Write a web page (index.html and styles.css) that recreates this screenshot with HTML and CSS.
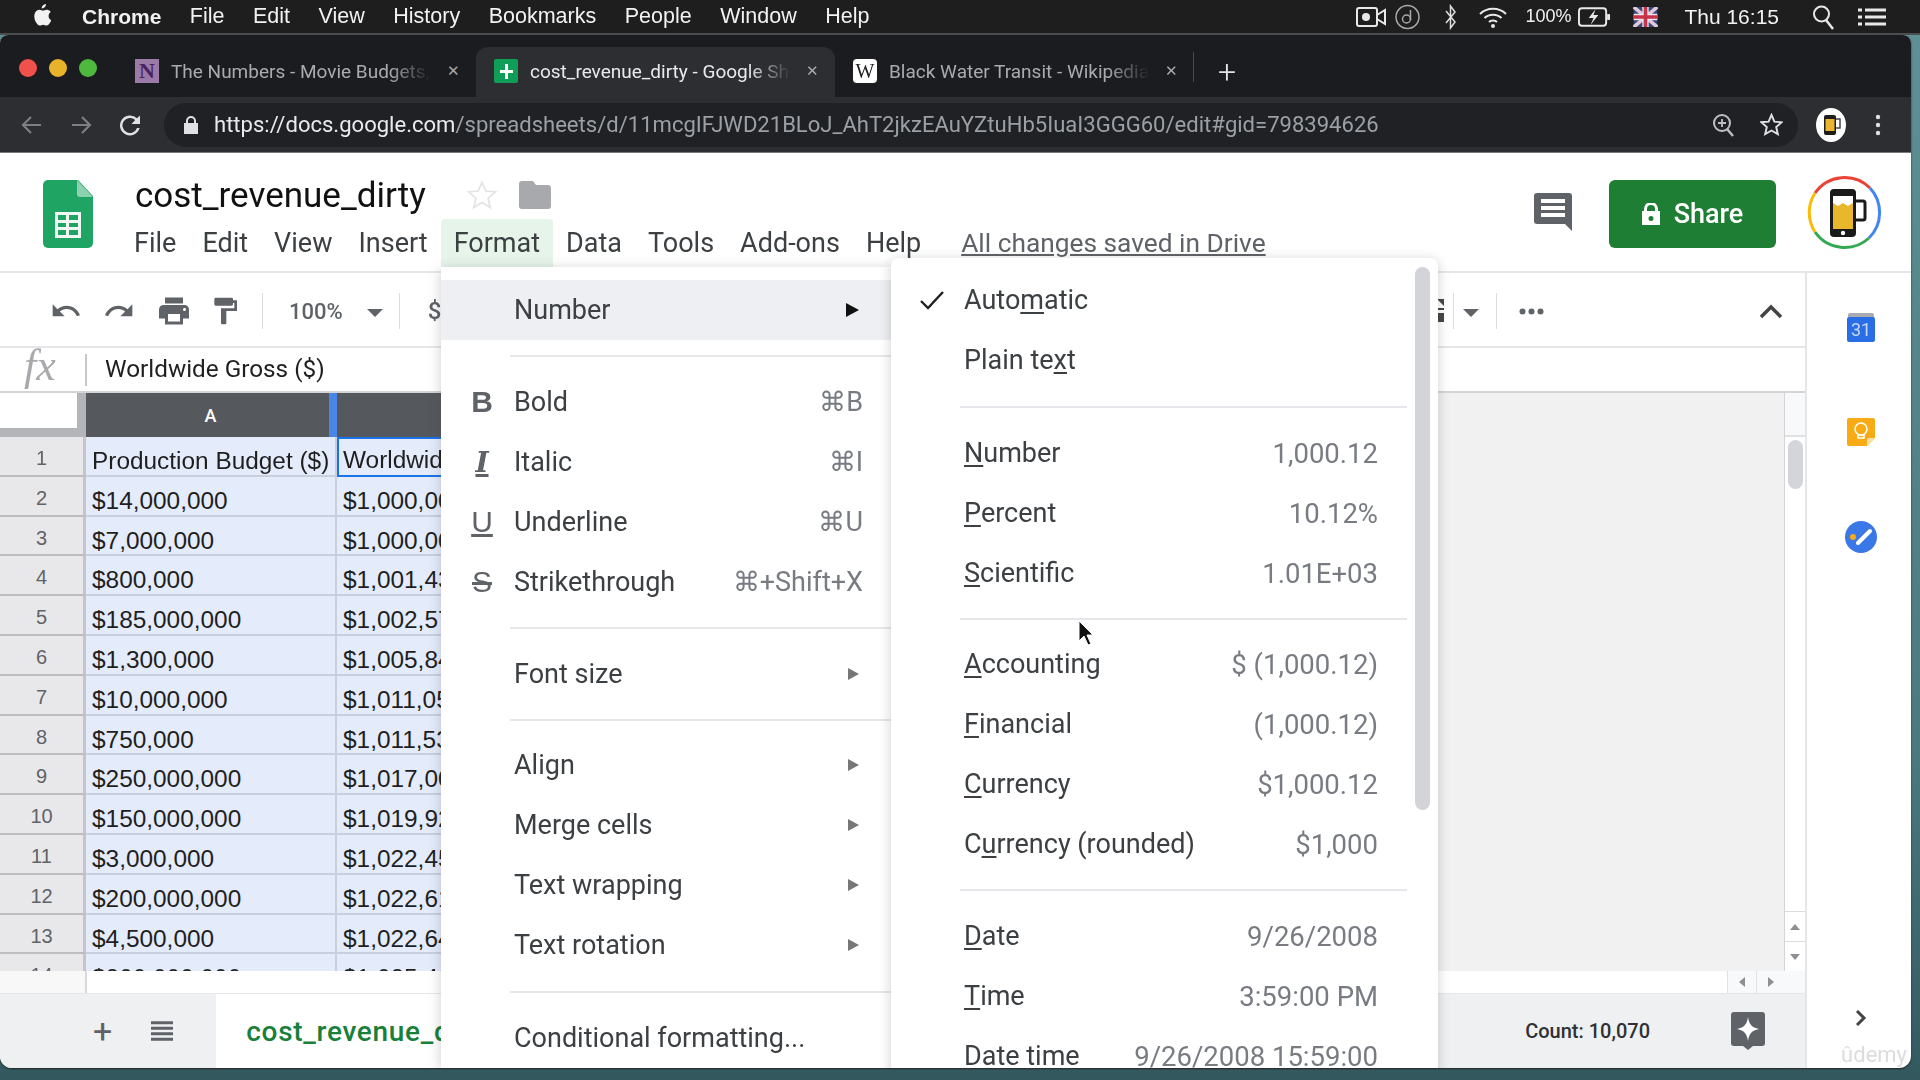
FILE: index.html
```html
<!DOCTYPE html>
<html lang="en">
  <head>
    <meta charset="UTF-8" />
    <title>cost_revenue_dirty - Google Sheets</title>
    <link rel="stylesheet" href="styles.css">
  </head>
  <body>
    <!-- mac menu bar -->
    <div class="menubar">
      <svg class="apple" width="20" height="24" viewBox="0 0 20 24"><path fill="#f2f2f2" d="M14 1c.2 2-1.9 4.600-4.200 4.400C9.500 3.200 11.800 1.100 14 1zM16.600 12.700c0-2.500 2-3.700 2.200-3.800-1.300-1.800-3.200-2.100-3.800-2.100-1.600-.2-3.200 1-4 1s-2.100-1-3.500-1c-1.800 0-3.400 1-4.300 2.600-1.900 3.200-.5 8 1.300 10.600.9 1.300 1.900 2.700 3.300 2.600 1.300 0 1.800-.8 3.400-.8s2 .8 3.400.8 2.300-1.300 3.200-2.600c1-1.500 1.400-2.900 1.400-3-.1 0-2.600-1-2.600-4.300z"/></svg>
      <b class="mac-item app-name">Chrome</b>
      <span class="mac-item">File</span>
      <span class="mac-item">Edit</span>
      <span class="mac-item">View</span>
      <span class="mac-item">History</span>
      <span class="mac-item">Bookmarks</span>
      <span class="mac-item">People</span>
      <span class="mac-item">Window</span>
      <span class="mac-item">Help</span>
      <div class="status">
        <svg width="30" height="24" viewBox="0 0 30 24"><rect x="1" y="3" width="20" height="18" rx="2" fill="none" stroke="#e8e8e8" stroke-width="2"/><circle cx="10" cy="12" r="4" fill="#e8e8e8"/><path d="M21 10l8-5v14l-8-5z" fill="none" stroke="#e8e8e8" stroke-width="2"/></svg>
        <svg class="st-d" width="25" height="26" viewBox="0 0 25 26"><circle cx="12.500" cy="13" r="11.500" fill="none" stroke="#a8a8a8" stroke-width="1.500"/><circle cx="11.500" cy="15" r="4" fill="none" stroke="#a8a8a8" stroke-width="1.500"/><path d="M15.500 6v10" stroke="#a8a8a8" stroke-width="1.500"/></svg>
        <svg class="st-bt" width="11" height="26" viewBox="0 0 11 26"><path d="M1 7l9 11-4.500 6V2l4.500 6-9 11" fill="none" stroke="#e0e0e0" stroke-width="1.500"/></svg>
        <svg class="st-wifi" width="30" height="24" viewBox="0 0 30 24"><path d="M2 9c7-7 19-7 26 0M6.500 13c4.500-4.500 12.500-4.500 17 0M11 17c2-2 6-2 8 0" fill="none" stroke="#e8e8e8" stroke-width="2"/><circle cx="15" cy="21" r="2" fill="#e8e8e8"/></svg>
        <span class="st-text st-pct">100%</span>
        <svg class="st-batt" width="33" height="22" viewBox="0 0 34 22"><rect x="1" y="2" width="28" height="18" rx="3" fill="none" stroke="#e8e8e8" stroke-width="2"/><rect x="30" y="8" width="3" height="6" fill="#e8e8e8"/><path d="M18 3l-7 9h5l-3 7 8-10h-5z" fill="#e8e8e8"/></svg>
        <svg class="st-flag" width="25" height="20" viewBox="0 0 26 22"><rect width="26" height="22" fill="#39457f"/><path d="M0 0l26 22M26 0L0 22" stroke="#e0c8d8" stroke-width="4"/><path d="M13 0v22M0 11h26" stroke="#e8e8ee" stroke-width="7"/><path d="M13 0v22M0 11h26" stroke="#c8324a" stroke-width="4"/></svg>
        <span class="st-text st-clock">Thu 16:15</span>
        <svg class="st-search" width="23" height="26" viewBox="0 0 23 26"><circle cx="9.500" cy="10" r="7.500" fill="none" stroke="#e8e8e8" stroke-width="2"/><path d="M14 16l7 9" stroke="#e8e8e8" stroke-width="2.500"/></svg>
        <svg class="st-list" width="28" height="20" viewBox="0 0 28 20"><path d="M7 3h21M7 10h21M7 17h21" stroke="#e8e8e8" stroke-width="3"/><path d="M0 3h4M0 10h4M0 17h4" stroke="#e8e8e8" stroke-width="3"/></svg>
      </div>
    </div>

    <div class="window">
      <!-- chrome tabs -->
      <div class="tabstrip">
        <div class="lights"><i class="light red"></i><i class="light yellow"></i><i class="light green"></i></div>
        <div class="tab">
          <span class="favicon fav-n">N</span>
          <span class="tab-title">The Numbers - Movie Budgets,</span>
          <span class="tab-x">✕</span>
        </div>
        <div class="tab active">
          <svg class="favicon" viewBox="0 0 24 24"><rect width="24" height="24" rx="2" fill="#0f9d58"/><path d="M11 5h3v6h5v3h-5v6h-3v-6H6v-3h5z" fill="#fff"/></svg>
          <span class="tab-title">cost_revenue_dirty - Google Sh</span>
          <span class="tab-x">✕</span>
        </div>
        <div class="tab">
          <span class="favicon fav-w">W</span>
          <span class="tab-title">Black Water Transit - Wikipedia</span>
          <span class="tab-x">✕</span>
        </div>
        <i class="tab-sep"></i>
        <span class="new-tab">+</span>
      </div>

      <!-- chrome address bar -->
      <div class="navbar">
        <svg class="nav-icon back" width="22" height="22" viewBox="0 0 22 22"><path d="M20 11H3M10 3l-8 8 8 8" fill="none" stroke="#7c7f84" stroke-width="2.200"/></svg>
        <svg class="nav-icon fwd" width="22" height="22" viewBox="0 0 22 22"><path d="M2 11h17M12 3l8 8-8 8" fill="none" stroke="#7c7f84" stroke-width="2.200"/></svg>
        <svg class="nav-icon reload" width="24" height="24" viewBox="0 0 24 24"><path fill="#dfe1e5" d="M19 5.300A10 10 0 1 0 21.600 15h-2.600a7.500 7.500 0 1 1-1.800-7.900L13.500 11H22V2.500z"/></svg>
        <div class="omnibox">
          <svg class="lock" width="14" height="18" viewBox="0 0 14 18"><path fill="#dfe1e5" d="M2 7V5a5 5 0 0 1 10 0v2h2v11H0V7zm2 0h6V5a3 3 0 0 0-6 0z"/></svg>
          <span class="url"><span class="url-host">https://docs.google.com</span>/spreadsheets/d/11mcgIFJWD21BLoJ_AhT2jkzEAuYZtuHb5IuaI3GGG60/edit#gid=798394626</span>
          <svg class="omni-zoom" width="22" height="24" viewBox="0 0 22 24"><circle cx="10" cy="10" r="8" fill="none" stroke="#bdc1c6" stroke-width="2"/><path d="M15 16l6 7" stroke="#bdc1c6" stroke-width="2.400"/><path d="M10 6v8M6 10h8" stroke="#bdc1c6" stroke-width="1.800"/></svg>
          <svg class="omni-star" width="23" height="23" viewBox="0 0 24 24"><path d="M12 2l3 7 7.500.7-5.600 5 1.700 7.400L12 18.300 5.400 22l1.700-7.400-5.600-5L9 9z" fill="none" stroke="#dfe1e5" stroke-width="2"/></svg>
        </div>
        <svg class="nav-avatar" width="30" height="34" viewBox="0 0 30 34"><ellipse cx="15" cy="17" rx="15" ry="17" fill="#fff"/><rect x="8" y="7" width="12" height="20" rx="2" fill="#1d1d1d"/><rect x="9.500" y="11" width="9" height="12" fill="#e8b52c"/><path d="M20 11h4v9h-4" fill="none" stroke="#444" stroke-width="1.500"/></svg>
        <svg class="nav-dots" width="6" height="22" viewBox="0 0 6 22"><circle cx="3" cy="3" r="2.200" fill="#dfe1e5"/><circle cx="3" cy="11" r="2.200" fill="#dfe1e5"/><circle cx="3" cy="19" r="2.200" fill="#dfe1e5"/></svg>
      </div>

      <!-- docs header -->
      <div class="docs">
        <header class="doc-head">
          <svg class="sheets-logo" width="50" height="68" viewBox="0 0 50 68"><path d="M5 0h30l15 16v47a5 5 0 0 1-5 5H5a5 5 0 0 1-5-5V5a5 5 0 0 1 5-5z" fill="#1fa463"/><path d="M34 0l16 17H37a3 3 0 0 1-3-3z" fill="#8ed1b1"/><path d="M12 32h26v26H12zm3 3v5h8v-5zm11 0v5h9v-5zm-11 8v4h8v-4zm11 0v4h9v-4zm-11 7v5h8v-5zm11 0v5h9v-5z" fill="#f1f8f4" fill-rule="evenodd"/></svg>
          <div class="doc-info">
            <div class="doc-title-row">
              <span class="doc-title">cost_revenue_dirty</span>
              <svg class="title-star" width="32" height="32" viewBox="0 0 24 24"><path d="M12 2.500l2.900 6.500 7.100.7-5.400 4.700 1.600 7-6.200-3.700-6.200 3.700 1.600-7L2 9.700 9.100 9z" fill="none" stroke="#e3e3e6" stroke-width="1.300"/></svg>
              <svg class="title-folder" width="32" height="28" viewBox="0 0 32 28"><path d="M3 0h11l3 4h12a3 3 0 0 1 3 3v18a3 3 0 0 1-3 3H3a3 3 0 0 1-3-3V3a3 3 0 0 1 3-3z" fill="#a8a9ad"/></svg>
            </div>
            <nav class="doc-menu">
              <span class="doc-menu-item">File</span>
              <span class="doc-menu-item">Edit</span>
              <span class="doc-menu-item">View</span>
              <span class="doc-menu-item">Insert</span>
              <span class="doc-menu-item open">Format</span>
              <span class="doc-menu-item">Data</span>
              <span class="doc-menu-item">Tools</span>
              <span class="doc-menu-item">Add-ons</span>
              <span class="doc-menu-item">Help</span>
              <a class="saved">All changes saved in Drive</a>
            </nav>
          </div>
          <svg class="comment-icon" width="38" height="38" viewBox="0 0 38 38"><path d="M3 0h32a3 3 0 0 1 3 3v35l-7-7H3a3 3 0 0 1-3-3V3a3 3 0 0 1 3-3z" fill="#5f6368"/><path d="M7 8h24M7 15h24M7 22h24" stroke="#fff" stroke-width="4"/></svg>
          <button class="share">
            <svg width="18" height="22" viewBox="0 0 18 22"><path fill="#fff" d="M2 8V6a7 7 0 0 1 14 0v2h2v14H0V8zm3 0h8V6a4 4 0 0 0-8 0zm4 5a2.500 2.500 0 1 0 0 5 2.500 2.500 0 0 0 0-5z" fill-rule="evenodd"/></svg>
            Share
          </button>
          <svg class="doc-avatar" width="75" height="75" viewBox="0 0 75 75">
            <path d="M8 18A36 36 0 0 1 63 13" fill="none" stroke="#ea4335" stroke-width="3"/>
            <path d="M63 13A36 36 0 0 1 62 63" fill="none" stroke="#4285f4" stroke-width="3"/>
            <path d="M62 63A36 36 0 0 1 8 57" fill="none" stroke="#34a853" stroke-width="3"/>
            <path d="M8 57A36 36 0 0 1 8 18" fill="none" stroke="#fbbc04" stroke-width="3"/>
            <rect x="23" y="14" width="26" height="48" rx="4" fill="#1a1a1a"/>
            <rect x="26" y="21" width="20" height="33" fill="#e9b72b"/>
            <path d="M26 21h20v7l-5 3-5-3-5 3-5-3z" fill="#fff"/>
            <path d="M49 26h7a2 2 0 0 1 2 2v15a2 2 0 0 1-2 2h-7" fill="none" stroke="#1a1a1a" stroke-width="3"/>
            <circle cx="36" cy="58" r="2.200" fill="#fff"/>
          </svg>
        </header>

        <div class="doc-body">
          <div class="main">
            <!-- toolbar -->
            <div class="toolbar">
              <svg class="tool" width="32" height="32" viewBox="0 0 24 24"><path fill="#5f6368" d="M12.500 8c-2.650 0-5.050.99-6.900 2.600L2 7v9h9l-3.620-3.620c1.390-1.160 3.160-1.880 5.120-1.880 3.540 0 6.550 2.310 7.600 5.500l2.370-.78C21.080 11.030 17.150 8 12.500 8z"/></svg>
              <svg class="tool" width="32" height="32" viewBox="0 0 24 24"><path fill="#5f6368" d="M18.400 10.600C16.550 8.990 14.150 8 11.500 8c-4.650 0-8.580 3.030-9.960 7.220L3.900 16c1.050-3.190 4.050-5.500 7.600-5.500 1.950 0 3.730.72 5.120 1.880L13 16h9V7l-3.600 3.600z"/></svg>
              <svg class="tool tool-print" width="36" height="36" viewBox="0 0 24 24"><path fill="#5f6368" d="M19 8H5c-1.660 0-3 1.340-3 3v6h4v4h12v-4h4v-6c0-1.660-1.340-3-3-3zm-3 11H8v-5h8v5zm3-7c-.55 0-1-.45-1-1s.45-1 1-1 1 .45 1 1-.45 1-1 1zm-1-9H6v4h12V3z"/></svg>
              <svg class="tool" width="32" height="32" viewBox="0 0 24 24"><path fill="#5f6368" d="M18 4V3c0-.55-.45-1-1-1H5c-.55 0-1 .45-1 1v4c0 .55.45 1 1 1h12c.55 0 1-.45 1-1V6h1v4H9v11c0 .55.45 1 1 1h2c.55 0 1-.45 1-1v-9h8V4h-3z"/></svg>
              <i class="tool-sep"></i>
              <span class="zoom-val">100%</span>
              <i class="caret"></i>
              <i class="tool-sep"></i>
              <span class="tool-dollar">$</span>
              <div class="tool-right">
                <svg width="8" height="26" viewBox="0 0 8 26"><path d="M0 1h7v7M0 10h7v2H0zm0 5h7v9H0" fill="#444"/></svg>
                <i class="tool-sep tall"></i>
                <i class="caret"></i>
                <i class="tool-sep wide"></i>
                <svg width="25" height="7" viewBox="0 0 25 7"><circle cx="3.500" cy="3.500" r="3" fill="#5f6368"/><circle cx="12.500" cy="3.500" r="3" fill="#5f6368"/><circle cx="21.500" cy="3.500" r="3" fill="#5f6368"/></svg>
                <svg class="collapse" width="24" height="15" viewBox="0 0 24 15"><path d="M2 13L12 3l10 10" fill="none" stroke="#444" stroke-width="3.500"/></svg>
              </div>
            </div>

            <!-- formula bar -->
            <div class="formula">
              <span class="fx">fx</span>
              <i class="fx-sep"></i>
              <span class="formula-text">Worldwide Gross ($)</span>
            </div>

            <!-- grid -->
            <div class="sheet-area">
              <div class="sheet">
                <div class="corner"></div>
                <div class="col-head col-a">A</div>
                <div class="col-head"></div>

                <div class="row-num">1</div><div class="cell">Production Budget ($)</div><div class="cell current">Worldwide Gross ($)</div>
                <div class="row-num">2</div><div class="cell">$14,000,000</div><div class="cell">$1,000,000</div>
                <div class="row-num">3</div><div class="cell">$7,000,000</div><div class="cell">$1,000,000</div>
                <div class="row-num">4</div><div class="cell">$800,000</div><div class="cell">$1,001,437</div>
                <div class="row-num">5</div><div class="cell">$185,000,000</div><div class="cell">$1,002,570</div>
                <div class="row-num">6</div><div class="cell">$1,300,000</div><div class="cell">$1,005,840</div>
                <div class="row-num">7</div><div class="cell">$10,000,000</div><div class="cell">$1,011,054</div>
                <div class="row-num">8</div><div class="cell">$750,000</div><div class="cell">$1,011,530</div>
                <div class="row-num">9</div><div class="cell">$250,000,000</div><div class="cell">$1,017,003</div>
                <div class="row-num">10</div><div class="cell">$150,000,000</div><div class="cell">$1,019,920</div>
                <div class="row-num">11</div><div class="cell">$3,000,000</div><div class="cell">$1,022,450</div>
                <div class="row-num">12</div><div class="cell">$200,000,000</div><div class="cell">$1,022,610</div>
                <div class="row-num">13</div><div class="cell">$4,500,000</div><div class="cell">$1,022,640</div>
                <div class="row-num">14</div><div class="cell">$200,000,000</div><div class="cell">$1,025,400</div>
              </div>
              <div class="vscroll">
                <div class="vscroll-top"></div>
                <div class="vscroll-thumb"></div>
                <div class="vscroll-btn"><i class="tri up"></i></div>
                <div class="vscroll-btn"><i class="tri down"></i></div>
              </div>
            </div>

            <div class="hscroll">
              <div class="hscroll-left"></div>
              <div class="hscroll-btn"><i class="tri left"></i></div>
              <div class="hscroll-btn"><i class="tri right"></i></div>
              <div class="hscroll-end"></div>
            </div>

            <!-- sheet tabs -->
            <div class="bottombar">
              <span class="add-sheet">+</span>
              <svg class="all-sheets" width="22" height="22" viewBox="0 0 24 22"><path d="M0 2h24M0 8h24M0 14h24M0 20h24" stroke="#5f6368" stroke-width="3.500"/></svg>
              <div class="sheet-tab">cost_revenue_dirty</div>
              <span class="count">Count: 10,070</span>
              <svg class="explore" width="34" height="38" viewBox="0 0 34 38"><path d="M3 0h28a3 3 0 0 1 3 3v28a3 3 0 0 1-3 3h-9l-5 4-5-4H3a3 3 0 0 1-3-3V3a3 3 0 0 1 3-3z" fill="#5f6368"/><path d="M17 5c1 7 3.500 10.500 11 12-7.500 1.500-10 5-11 12-1-7-3.500-10.500-11-12 7.500-1.500 10-5 11-12z" fill="#fff"/></svg>
            </div>
          </div>

          <!-- side panel -->
          <aside class="side">
            <svg class="side-cal" width="28" height="29" viewBox="0 0 28 29"><rect x="1" y="0" width="26" height="8" rx="2" fill="#a9abb0"/><rect y="4" width="28" height="25" rx="2" fill="#2a6ee6"/><text x="14" y="23" text-anchor="middle" class="cal-num">31</text></svg>
            <svg class="side-keep" width="28" height="28" viewBox="0 0 28 28"><path d="M2 0h24a2 2 0 0 1 2 2v18l-8 8H2a2 2 0 0 1-2-2V2a2 2 0 0 1 2-2z" fill="#f7ab15"/><path d="M20 28v-6a2 2 0 0 1 2-2h6z" fill="#fbe0a4"/><circle cx="14" cy="11" r="6" fill="none" stroke="#fff" stroke-width="1.500"/><path d="M11 17h6v3h-6z" fill="none" stroke="#fff" stroke-width="1.500"/></svg>
            <svg class="side-tasks" width="32" height="32" viewBox="0 0 32 32"><circle cx="16" cy="16" r="16" fill="#3b78e7"/><path d="M13 22L25 10" stroke="#fff" stroke-width="4" stroke-linecap="round"/><circle cx="8" cy="16" r="3" fill="#f7ab15"/></svg>
            <svg class="side-open" width="12" height="18" viewBox="0 0 12 18"><path d="M2 2l7 7-7 7" fill="none" stroke="#444" stroke-width="3"/></svg>
          </aside>
        </div>
      </div>

      <!-- format menu, lies over the grid -->
      <div class="menu format-menu">
        <div class="menu-row hl"><span class="m-icon"></span><span>Number</span><i class="arrow dark"></i></div>
        <div class="menu-sep"></div>
        <div class="menu-row"><span class="m-icon m-b">B</span><span>Bold</span><span class="m-key">⌘B</span></div>
        <div class="menu-row"><span class="m-icon m-i">I</span><span>Italic</span><span class="m-key">⌘I</span></div>
        <div class="menu-row"><span class="m-icon m-u">U</span><span>Underline</span><span class="m-key">⌘U</span></div>
        <div class="menu-row"><span class="m-icon m-s">S</span><span>Strikethrough</span><span class="m-key">⌘+Shift+X</span></div>
        <div class="menu-sep"></div>
        <div class="menu-row"><span class="m-icon"></span><span>Font size</span><i class="arrow"></i></div>
        <div class="menu-sep narrow"></div>
        <div class="menu-row"><span class="m-icon"></span><span>Align</span><i class="arrow"></i></div>
        <div class="menu-row"><span class="m-icon"></span><span>Merge cells</span><i class="arrow"></i></div>
        <div class="menu-row"><span class="m-icon"></span><span>Text wrapping</span><i class="arrow"></i></div>
        <div class="menu-row"><span class="m-icon"></span><span>Text rotation</span><i class="arrow"></i></div>
        <div class="menu-sep broad"></div>
        <div class="menu-row"><span class="m-icon"></span><span>Conditional formatting...</span></div>
      </div>

      <!-- number submenu -->
      <div class="menu number-menu">
        <div class="sub-thumb"></div>
        <div class="menu-row">
          <svg class="check" width="26" height="20" viewBox="0 0 26 20"><path d="M2 11l7 7L24 2" fill="none" stroke="#202124" stroke-width="2.400"/></svg>
          <span>Auto<u>m</u>atic</span>
        </div>
        <div class="menu-row"><span>Plain te<u>x</u>t</span></div>
        <div class="menu-sep broad"></div>
        <div class="menu-row"><span><u>N</u>umber</span><span class="m-key">1,000.12</span></div>
        <div class="menu-row"><span><u>P</u>ercent</span><span class="m-key">10.12%</span></div>
        <div class="menu-row"><span><u>S</u>cientific</span><span class="m-key">1.01E+03</span></div>
        <div class="menu-sep narrow"></div>
        <div class="menu-row"><span><u>A</u>ccounting</span><span class="m-key">$ (1,000.12)</span></div>
        <div class="menu-row"><span><u>F</u>inancial</span><span class="m-key">(1,000.12)</span></div>
        <div class="menu-row"><span><u>C</u>urrency</span><span class="m-key">$1,000.12</span></div>
        <div class="menu-row"><span>C<u>u</u>rrency (rounded)</span><span class="m-key">$1,000</span></div>
        <div class="menu-sep"></div>
        <div class="menu-row"><span><u>D</u>ate</span><span class="m-key">9/26/2008</span></div>
        <div class="menu-row"><span><u>T</u>ime</span><span class="m-key">3:59:00 PM</span></div>
        <div class="menu-row"><span>Date t<u>i</u>me</span><span class="m-key">9/26/2008 15:59:00</span></div>
      </div>

      <svg class="cursor" width="16" height="26" viewBox="0 0 16 26"><path d="M1 1v20l5-5 4 9 3-1-4-9h6z" fill="#111" stroke="#fff" stroke-width="1"/></svg>
      <span class="watermark">ûdemy</span>
    </div>
  </body>
</html>
```

FILE: styles.css
```css
* {
  box-sizing: border-box;
}
body {
  margin: 0;
  width: 1920px;
  height: 1080px;
  overflow: hidden;
  background: linear-gradient(180deg, #5e9294 0%, #4a7a7e 70%, #33595f 100%);
  font-family: Roboto, "Liberation Sans", sans-serif;
}
i {
  display: block;
}

/* mac menu bar */
.menubar {
  height: 35px;
  background-color: #1e1e1e;
  border-bottom: 2px solid #4d4e50;
  color: #f2f2f2;
  display: flex;
  align-items: center;
  padding-left: 32px;
  font-family: "Liberation Sans", sans-serif;
  font-size: 21.5px;
  filter: blur(0.4px);
}
.apple {
  margin-right: 30px;
  margin-top: -3px;
}
.mac-item {
  margin-right: 28.5px;
}
.app-name {
  font-size: 21px;
}
.status {
  margin-left: auto;
  display: flex;
  align-items: center;
  padding-right: 34px;
}
.st-d {
  margin-left: 9px;
}
.st-bt {
  margin-left: 25px;
}
.st-wifi {
  margin-left: 22px;
}
.st-text {
  font-size: 18px;
  white-space: nowrap;
}
.st-pct {
  margin-left: 17px;
}
.st-batt {
  margin-left: 7px;
}
.st-flag {
  margin-left: 22px;
}
.st-clock {
  margin-left: 26px;
  font-size: 21px;
}
.st-search {
  margin-left: 33px;
}
.st-list {
  margin-left: 23px;
}

/* browser window */
.window {
  position: relative;
  width: 1911px;
  height: 1033px;
  overflow: hidden;
  border-radius: 8px 8px 12px 12px;
  display: flex;
  flex-direction: column;
  background-color: #fff;
  box-shadow: 0 1px 2px #222;
  filter: blur(0.4px);
}
.tabstrip {
  height: 62px;
  background-color: #1b1c1f;
  display: flex;
  align-items: flex-end;
  flex-shrink: 0;
}
.lights {
  display: flex;
  gap: 12px;
  padding: 0 0 20px 19px;
  width: 117px;
}
.light {
  width: 18px;
  height: 18px;
  border-radius: 50%;
}
.red {
  background-color: #f2504b;
}
.yellow {
  background-color: #e6b32a;
}
.green {
  background-color: #4fb93e;
}
.tab {
  width: 359px;
  height: 50px;
  padding: 0 16px 2px 18px;
  display: flex;
  align-items: center;
  color: #a9abae;
  font-size: 19px;
  border-radius: 12px 12px 0 0;
}
.tab.active {
  background-color: #2c2e31;
  color: #e8eaed;
}
.favicon {
  width: 24px;
  height: 24px;
  margin-right: 12px;
  flex-shrink: 0;
  display: flex;
  align-items: center;
  justify-content: center;
}
.fav-n {
  background-color: #9c7aa8;
  color: #4a2460;
  font: bold 22px "Liberation Serif", serif;
}
.fav-w {
  background-color: #fff;
  color: #222;
  border-radius: 4px;
  font: 20px "Liberation Serif", serif;
}
.tab-title {
  flex: 1;
  min-width: 0;
  overflow: hidden;
  white-space: nowrap;
  -webkit-mask-image: linear-gradient(90deg, #000 82%, transparent 98%);
  mask-image: linear-gradient(90deg, #000 82%, transparent 98%);
}
.tab-x {
  margin-left: 10px;
  font-size: 15px;
  color: #aaa;
}
.tab-sep {
  width: 1px;
  height: 30px;
  margin: 0 0 15px -1px;
  background-color: #4a4b4e;
}
.new-tab {
  color: #dfe1e5;
  font-size: 32px;
  font-weight: 300;
  margin: 0 0 6px 24px;
}
.navbar {
  height: 56px;
  flex-shrink: 0;
  background-color: #2c2e31;
  border-bottom: 1px solid #77797c;
  display: flex;
  align-items: center;
  padding-left: 21px;
}
.nav-icon.fwd {
  margin-left: 27px;
}
.nav-icon.reload {
  margin-left: 26px;
}
.omnibox {
  width: 1634px;
  height: 44px;
  margin-left: 22px;
  border-radius: 22px;
  background-color: #202124;
  display: flex;
  align-items: center;
  padding-left: 20px;
}
.url {
  margin-left: 16px;
  color: #9aa0a6;
  font-size: 22.05px;
  white-space: nowrap;
}
.url-host {
  color: #e8eaed;
}
.omni-zoom {
  margin-left: auto;
}
.omni-star {
  margin-left: 26px;
  margin-right: 15px;
}
.nav-avatar {
  margin-left: 18px;
}
.nav-dots {
  margin-left: 29px;
}

/* docs header */
.docs {
  flex: 1;
  display: flex;
  flex-direction: column;
  min-height: 0;
}
.doc-head {
  height: 120px;
  flex-shrink: 0;
  border-bottom: 2px solid #e6e6e8;
  display: flex;
  align-items: flex-start;
  padding-left: 43px;
}
.sheets-logo {
  margin-top: 27px;
}
.doc-info {
  margin-left: 42px;
  width: 1400px;
}
.doc-title-row {
  margin-top: 18px;
  height: 48px;
  display: flex;
  align-items: center;
}
.doc-title {
  font-size: 35px;
  color: #111;
}
.title-star {
  margin-left: 40px;
}
.title-folder {
  margin-left: 21px;
}
.doc-menu {
  display: flex;
  align-items: center;
  margin-left: -14px;
  font-size: 27px;
  color: #3c4043;
}
.doc-menu-item {
  height: 48px;
  line-height: 48px;
  padding: 0 13px;
}
.doc-menu-item.open {
  background-color: #e6f4ea;
  border-radius: 4px 4px 0 0;
}
.saved {
  margin-left: 27px;
  color: #5f6368;
  font-size: 26.3px;
  text-decoration: underline;
}
.comment-icon {
  margin: 40px 0 0 -1px;
}
.share {
  width: 167px;
  height: 68px;
  margin: 27px 0 0 37px;
  padding-bottom: 2px;
  border: none;
  border-radius: 6px;
  background-color: #1e7e34;
  color: #fff;
  font: 500 27px Roboto, sans-serif;
  display: flex;
  align-items: center;
  justify-content: center;
  gap: 14px;
}
.doc-avatar {
  margin: 22px 0 0 31px;
}

/* below the header */
.doc-body {
  flex: 1;
  display: flex;
  min-height: 0;
}
.main {
  width: 1807px;
  display: flex;
  flex-direction: column;
  border-right: 2px solid #e6e6e8;
}
.toolbar {
  height: 75px;
  flex-shrink: 0;
  border-bottom: 2px solid #e6e6e8;
  display: flex;
  align-items: center;
  padding: 3px 0 0 50px;
}
.tool {
  margin-right: 21px;
}
.tool-print {
  margin-right: 17px;
}
.tool-sep {
  width: 1px;
  height: 36px;
  background-color: #dadce0;
}
.zoom-val {
  margin-left: 26px;
  font-size: 22px;
  color: #5f6368;
  font-weight: 500;
}
.caret {
  width: 0;
  height: 0;
  margin: 3px 16px 0 24px;
  border-left: 8px solid transparent;
  border-right: 8px solid transparent;
  border-top: 8px solid #5f6368;
}
.tool-dollar {
  margin-left: 28px;
  font-size: 24px;
  font-weight: 500;
  color: #5f6368;
}
.tool-right {
  margin-left: auto;
  display: flex;
  align-items: center;
  padding: 0 22px 0 8px;
  width: 376px;
}
.tool-right .tool-sep.tall {
  margin-left: 8px;
}
.tool-right .caret {
  margin: 3px 17px 0 9px;
}
.tool-sep.wide {
  margin-right: 22px;
}
.collapse {
  margin-left: auto;
}
.formula {
  height: 45px;
  flex-shrink: 0;
  display: flex;
  align-items: center;
  border-bottom: 2px solid #d4d4d6;
}
.fx {
  width: 85px;
  padding-left: 24px;
  font: italic 44px "Liberation Serif", serif;
  line-height: 40px;
  margin-top: -7px;
  color: #a8a9ac;
}
.fx-sep {
  width: 2px;
  height: 32px;
  background-color: #c8c8ca;
}
.formula-text {
  margin: -2px 0 0 18px;
  font-size: 24.3px;
  color: #1f1f1f;
}

/* the grid */
.sheet-area {
  height: 578px;
  flex-shrink: 0;
  display: flex;
  background-color: #f1f1f1;
}
.sheet {
  flex: 1;
  overflow: hidden;
  display: grid;
  grid-template-columns: 86px 251px 260px;
  grid-template-rows: 44px;
  grid-auto-rows: 39.8px;
  font-family: "Liberation Sans", sans-serif;
}
.corner {
  background-color: #fff;
  border-right: 9px solid #b4b5b8;
  border-bottom: 9px solid #b4b5b8;
}
.col-head {
  background-color: #55585c;
  color: #fff;
  font: 500 18px Roboto, sans-serif;
  text-align: center;
  line-height: 46px;
  white-space: nowrap;
}
.col-a {
  border-right: 8px solid #4a86e8;
  padding-left: 6px;
}
.row-num {
  background-color: #e8e8ea;
  border-right: 3px solid #c4c5c9;
  border-bottom: 2px solid #bcbdc1;
  color: #606368;
  font-size: 20px;
  text-align: center;
  line-height: 43px;
  overflow: hidden;
}
.cell {
  background-color: #e4ebfb;
  border-right: 2px solid #c9cfdc;
  border-bottom: 2px solid #c9cfdc;
  color: #1f1f1f;
  font-size: 24.4px;
  line-height: 38px;
  padding: 5px 0 0 6px;
  white-space: nowrap;
  overflow: hidden;
}
.cell.current {
  border: 2px solid #1a73e8;
  padding: 3px 0 0 4px;
  line-height: 36px;
}
.vscroll {
  width: 21px;
  display: flex;
  flex-direction: column;
  background-color: #fff;
  border-left: 1px solid #d4d4d6;
}
.vscroll-top {
  height: 44px;
  background-color: #f8f9fa;
  border-bottom: 2px solid #dfe1e5;
}
.vscroll-thumb {
  width: 15px;
  height: 49px;
  margin: 3px 0 auto 3px;
  border-radius: 8px;
  background-color: #d4d5da;
}
.vscroll-btn {
  height: 30px;
  border-top: 1px solid #dadce0;
  display: flex;
  align-items: center;
  justify-content: center;
}
.tri {
  width: 0;
  height: 0;
  border: 5px solid transparent;
}
.tri.up {
  border-top: 0;
  border-bottom: 6px solid #8d8f94;
  border-left-width: 5px;
  border-right-width: 5px;
}
.tri.down {
  border-bottom: 0;
  border-top: 6px solid #8d8f94;
}
.tri.left {
  border-left: 0;
  border-right: 6px solid #8d8f94;
}
.tri.right {
  border-right: 0;
  border-left: 6px solid #8d8f94;
}
.hscroll {
  height: 22px;
  flex-shrink: 0;
  display: flex;
  background-color: #fff;
}
.hscroll-left {
  width: 1727px;
  background: linear-gradient(90deg, #f8f8f8 85px, #d8d8dc 85px, #d8d8dc 87px, #fff 87px);
}
.hscroll-btn {
  width: 29px;
  display: flex;
  align-items: center;
  justify-content: center;
  background-color: #f8f9fa;
  border-left: 1px solid #dfe1e5;
}
.hscroll-end {
  flex: 1;
  background-color: #f8f9fa;
}
.bottombar {
  flex: 1;
  display: flex;
  align-items: center;
  background-color: #eff0f2;
  border-top: 1px solid #e6e6e8;
}
.add-sheet {
  margin-left: 93px;
  font-size: 34px;
  color: #5f6368;
  line-height: 1;
}
.all-sheets {
  margin-left: 39px;
}
.sheet-tab {
  margin-left: 43px;
  width: 300px;
  height: 100%;
  padding-left: 30px;
  display: flex;
  align-items: center;
  background-color: #fff;
  color: #188038;
  font-size: 28px;
  font-weight: 500;
  letter-spacing: 0.7px;
  white-space: nowrap;
}
.count {
  margin-left: auto;
  font-size: 20px;
  font-weight: 500;
  color: #303134;
}
.explore {
  margin: 0 40px 0 81px;
}

/* side panel */
.side {
  flex: 1;
  display: flex;
  flex-direction: column;
  align-items: center;
  padding: 40px 0 0 4px;
}
.cal-num {
  font: 400 18px Roboto, sans-serif;
  fill: #c8d8f8;
}
.side-keep {
  margin-top: 76px;
}
.side-tasks {
  margin-top: 75px;
}
.side-open {
  margin-top: auto;
  margin-bottom: 41px;
}

/* menus */
.menu {
  position: absolute;
  background-color: #fff;
  box-shadow: 0 2px 12px rgba(60, 64, 67, 0.25);
  color: #3c4043;
  font-size: 27px;
}
.format-menu {
  left: 441px;
  top: 232px;
  width: 450px;
  padding-top: 13px;
}
.number-menu {
  left: 891px;
  top: 223px;
  width: 547px;
  padding-top: 12px;
  border-radius: 8px 8px 0 0;
}
.menu-row {
  height: 60px;
  display: flex;
  align-items: center;
  justify-content: space-between;
  padding-right: 28px;
  white-space: nowrap;
}
.menu-row.hl {
  background-color: #eeeff2;
}
.m-icon {
  width: 73px;
  flex-shrink: 0;
  text-align: center;
  padding-left: 9px;
  color: #5f6368;
  font: bold 30px "Liberation Sans", sans-serif;
}
.m-icon + span {
  margin-right: auto;
}
.m-i {
  font: italic bold 28px "DejaVu Serif", serif;
  text-decoration: underline;
  text-decoration-thickness: 3px;
}
.m-u {
  font-weight: normal;
  text-decoration: underline;
  text-decoration-thickness: 3px;
}
.m-s {
  font-weight: normal;
  text-decoration: line-through;
  text-decoration-thickness: 3px;
}
.m-key {
  color: #787c82;
}
.number-menu .m-key {
  font-size: 27.5px;
}
.menu-sep {
  height: 32px;
  display: flex;
  align-items: center;
}
.menu-sep.narrow {
  height: 31px;
}
.menu-sep.broad {
  height: 33px;
}
.menu-sep::before {
  content: "";
  display: block;
  width: 100%;
  height: 2px;
  margin-left: 69px;
  background-color: #e6e7eb;
}
.arrow {
  width: 0;
  height: 0;
  margin-right: 4px;
  border-top: 6px solid transparent;
  border-bottom: 6px solid transparent;
  border-left: 11px solid #777;
}
.arrow.dark {
  border-top-width: 7px;
  border-bottom-width: 7px;
  border-left: 13px solid #111;
}
.number-menu .menu-row {
  padding: 0 60px 0 73px;
  position: relative;
}
.number-menu .menu-sep {
  padding-right: 31px;
}
.check {
  position: absolute;
  left: 28px;
  top: 20px;
}
.sub-thumb {
  position: absolute;
  left: 524px;
  top: 9px;
  width: 15px;
  height: 543px;
  border-radius: 8px;
  background-color: #d3d4d9;
}
.number-menu u {
  text-underline-offset: 3px;
}
.cursor {
  position: absolute;
  left: 1078px;
  top: 585px;
}
.watermark {
  position: absolute;
  right: 4px;
  bottom: 1px;
  color: #dcdcdc;
  font-size: 22px;
}
```
